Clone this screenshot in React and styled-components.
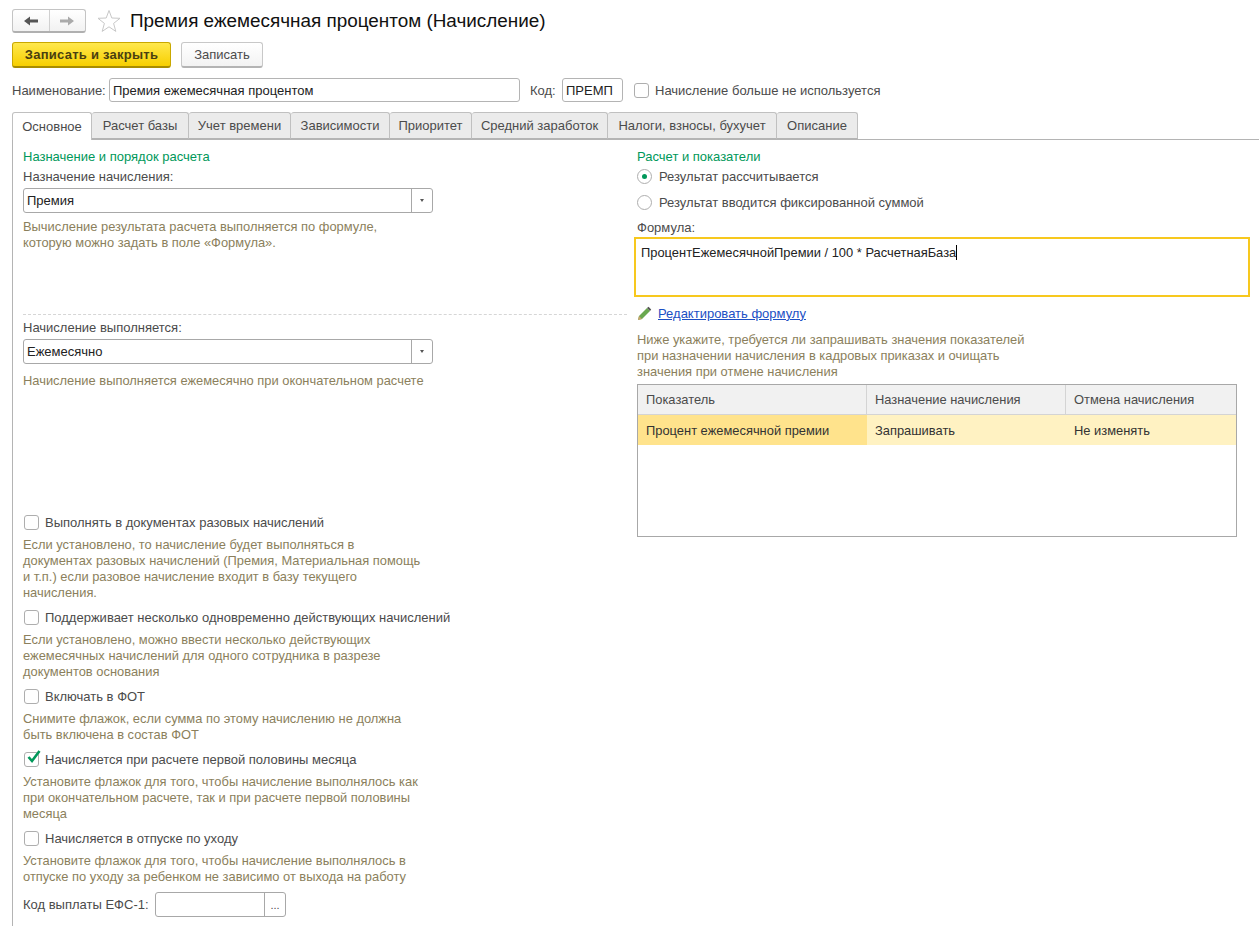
import styled, { createGlobalStyle } from 'styled-components'

const GlobalStyle = createGlobalStyle`
  html, body {
    margin: 0;
    padding: 0;
    background: #fff;
    font-family: "Liberation Sans", Arial, sans-serif;
    font-size: 13px;
    color: #4b4b4b;
  }
`
const Page = styled.div`
  width: 1259px;
  height: 926px;
  overflow: hidden;
  box-sizing: border-box;
  padding: 9px 0 0 12px;
`
const TitleRow = styled.div`
  display: flex;
  align-items: center;
  height: 24px;
`
const NavGroup = styled.div`
  display: flex;
  width: 74px;
  height: 24px;
  box-sizing: border-box;
  border: 1px solid #c4c4c4;
  border-bottom: 2px solid #b0b0b0;
  border-radius: 3px;
  background: linear-gradient(#fff, #f2f2f2);
`
const NavButton = styled.div`
  flex: 1;
  display: flex;
  align-items: center;
  justify-content: center;
  border-left: ${(p) => (p.$divided ? '1px solid #d0d0d0' : 'none')};
`
const StarIcon = styled.svg`
  margin: 0 9px 0 11px;
`
const Title = styled.h1`
  margin: 0;
  font-size: 18.9px;
  font-weight: 400;
  color: #111;
`
const ButtonRow = styled.div`
  display: flex;
  gap: 10px;
  margin-top: 9px;
`
const Button = styled.div`
  height: 26px;
  box-sizing: border-box;
  display: flex;
  align-items: center;
  justify-content: center;
  border-radius: 3px;
  width: ${(p) => (p.$primary ? '159px' : '82px')};
  font-weight: ${(p) => (p.$primary ? 700 : 400)};
  letter-spacing: ${(p) => (p.$primary ? '0.25px' : '0')};
  color: ${(p) => (p.$primary ? '#4a3f10' : '#4b4b4b')};
  background: ${(p) => (p.$primary ? 'linear-gradient(#ffe84d, #f7cf00)' : 'linear-gradient(#fff, #f3f3f3)')};
  border: 1px solid ${(p) => (p.$primary ? '#c9a800' : '#c8c8c8')};
  border-bottom: 2px solid ${(p) => (p.$primary ? '#a88c00' : '#b4b4b4')};
`
const NameRow = styled.div`
  display: flex;
  align-items: center;
  height: 24px;
  margin-top: 10px;
`
const Label = styled.span`
  flex: none;
  white-space: nowrap;
  color: #4b4b4b;
  width: ${(p) => (p.$width ? `${p.$width}px` : 'auto')};
  margin-left: ${(p) => p.$left || 0}px;
`
const Input = styled.div`
  box-sizing: border-box;
  display: flex;
  align-items: center;
  height: 24px;
  width: ${(p) => p.$width}px;
  padding-left: 3px;
  border: 1px solid #b4b4b4;
  border-radius: 3px;
  color: #222;
  white-space: nowrap;
  background: #fff;
`
const Box = styled.span`
  flex: none;
  width: 15px;
  height: 15px;
  box-sizing: border-box;
  border: 1px solid #aeaeae;
  border-radius: 3px;
  background: #fff;
  position: relative;
  margin-left: ${(p) => p.$left || 0}px;
  margin-right: 6px;
`
const CheckMark = styled.svg`
  position: absolute;
  left: 1px;
  top: -4px;
`
const TabBar = styled.div`
  display: flex;
  height: 28px;
  margin-top: 10px;
  box-sizing: border-box;
  border-bottom: 1px solid #b4b4b4;
`
const Tab = styled.div`
  box-sizing: border-box;
  width: ${(p) => p.$width}px;
  height: ${(p) => (p.$active ? 28 : 27)}px;
  display: flex;
  align-items: center;
  justify-content: center;
  border: 1px solid #c0c0c0;
  border-left: ${(p) => (p.$first ? '1px solid #c0c0c0' : 'none')};
  border-bottom: ${(p) => (p.$active ? 'none' : '1px solid #b4b4b4')};
  border-radius: 3px 3px 0 0;
  background: ${(p) => (p.$active ? '#fff' : '#ebebeb')};
  color: #4b4b4b;
`
const Panel = styled.div`
  display: grid;
  grid-template-columns: 604px 622px;
  column-gap: 10px;
  height: 800px;
  padding-left: 10px;
  border-left: 1px solid #b4b4b4;
`
const Column = styled.div`
  display: flex;
  flex-direction: column;
`
const GroupTitle = styled.div`
  color: #00985a;
  height: 16px;
  line-height: 16px;
  margin-top: 9px;
`
const FieldLabel = styled.div`
  height: 16px;
  line-height: 16px;
  margin-top: ${(p) => p.$top || 0}px;
`
const SelectBox = styled.div`
  box-sizing: border-box;
  width: 410px;
  height: 25px;
  display: flex;
  align-items: center;
  border: 1px solid #a8a8a8;
  border-radius: 3px;
  margin-top: ${(p) => p.$top || 0}px;
  color: #222;
`
const SelectValue = styled.div`
  flex: 1;
  padding-left: 3px;
`
const SelectArrow = styled.div`
  width: 20px;
  height: 100%;
  display: flex;
  align-items: center;
  justify-content: center;
  border-left: 1px solid #a8a8a8;
  &::after {
    content: '';
    border-left: 2.5px solid transparent;
    border-right: 2.5px solid transparent;
    border-top: 3px solid #555;
  }
`
const Hint = styled.div`
  color: #8b7f5c;
  font-size: 12.9px;
  line-height: 16px;
  white-space: pre-line;
  margin-top: ${(p) => p.$top || 0}px;
`
const Divider = styled.div`
  border-top: 1px dashed #d6d6d6;
  margin-top: ${(p) => p.$top || 0}px;
`
const CheckRow = styled.div`
  display: flex;
  align-items: center;
  height: 18px;
  padding-left: 1px;
  margin-top: ${(p) => p.$top || 0}px;
`
const BottomRow = styled.div`
  display: flex;
  align-items: center;
  height: 25px;
  margin-top: 7px;
`
const PickField = styled.div`
  display: flex;
  width: 131px;
  height: 25px;
  box-sizing: border-box;
  border: 1px solid #a8a8a8;
  border-radius: 3px;
`
const PickButton = styled.div`
  margin-left: auto;
  width: 20px;
  border-left: 1px solid #a8a8a8;
  text-align: center;
  font-size: 11px;
  line-height: 24px;
`
const RadioRow = styled.div`
  display: flex;
  align-items: center;
  height: 16px;
  margin-top: ${(p) => p.$top || 0}px;
`
const Radio = styled.span`
  width: 15px;
  height: 15px;
  box-sizing: border-box;
  border: 1px solid #aeaeae;
  border-radius: 50%;
  margin-right: 7px;
  display: flex;
  align-items: center;
  justify-content: center;
  &::after {
    content: '';
    display: ${(p) => (p.$on ? 'block' : 'none')};
    width: 5px;
    height: 5px;
    border-radius: 50%;
    background: #00985a;
  }
`
const FormulaBox = styled.div`
  box-sizing: border-box;
  width: 616px;
  height: 60px;
  margin: 1px 0 0 -3px;
  padding: 6px 5px;
  border: 2px solid #f7c81e;
  color: #222;
  font-size: 12.9px;
`
const Caret = styled.span`
  display: inline-block;
  width: 1px;
  height: 15px;
  background: #000;
  vertical-align: -3px;
`
const LinkRow = styled.div`
  display: flex;
  align-items: center;
  gap: 6px;
  height: 16px;
  margin-top: 8px;
`
const FormulaLink = styled.a`
  color: #1b4fc4;
  text-decoration: underline;
`
const Table = styled.div`
  box-sizing: border-box;
  width: 600px;
  height: 153px;
  margin-top: 4px;
  border: 1px solid #a8a8a8;
  font-size: 12.9px;
`
const TableRow = styled.div`
  display: grid;
  grid-template-columns: 229px 199px 1fr;
  height: 30px;
`
const HeadCell = styled.div`
  display: flex;
  align-items: center;
  padding-left: 8px;
  background: #f1f1f1;
  border-right: 1px solid #d4d4d4;
  border-bottom: 1px solid #d4d4d4;
  &:last-child {
    border-right: none;
  }
`
const BodyCell = styled.div`
  display: flex;
  align-items: center;
  padding-left: 8px;
  color: #333;
  background: ${(p) => (p.$current ? '#ffe38c' : '#fff2c2')};
`

const tabs = [
  ['Основное', 80],
  ['Расчет базы', 97],
  ['Учет времени', 102],
  ['Зависимости', 99],
  ['Приоритет', 82],
  ['Средний заработок', 136],
  ['Налоги, взносы, бухучет', 169],
  ['Описание', 81],
]

function Check({ checked, children, top }) {
  return (
    <CheckRow $top={top}>
      <Box>
        {checked && (
          <CheckMark width="16" height="16" viewBox="0 0 16 16">
            <path d="M2.5 8 L6 12 L13.5 2" fill="none" stroke="#00985a" strokeWidth="2.6" />
          </CheckMark>
        )}
      </Box>
      {children}
    </CheckRow>
  )
}

export default function App() {
  return (
    <Page>
      <GlobalStyle />
      <TitleRow>
        <NavGroup>
          <NavButton>
            <svg width="16" height="12" viewBox="0 0 16 12">
              <path d="M1 6 L7 1.5 V4.5 H15 V7.5 H7 V10.5 Z" fill="#555" />
            </svg>
          </NavButton>
          <NavButton $divided>
            <svg width="16" height="12" viewBox="0 0 16 12">
              <path d="M15 6 L9 1.5 V4.5 H1 V7.5 H9 V10.5 Z" fill="#aaa" />
            </svg>
          </NavButton>
        </NavGroup>
        <StarIcon width="24" height="24" viewBox="0 0 24 24">
          <path
            d="M12 1.5 L14.8 9 L23 9.3 L16.6 14.4 L18.8 22.4 L12 17.8 L5.2 22.4 L7.4 14.4 L1 9.3 L9.2 9 Z"
            fill="#fff"
            stroke="#c8c8c8"
          />
        </StarIcon>
        <Title>Премия ежемесячная процентом (Начисление)</Title>
      </TitleRow>
      <ButtonRow>
        <Button $primary>Записать и закрыть</Button>
        <Button>Записать</Button>
      </ButtonRow>
      <NameRow>
        <Label $width={97}>Наименование:</Label>
        <Input $width={411}>Премия ежемесячная процентом</Input>
        <Label $width={32} $left={10}>
          Код:
        </Label>
        <Input $width={61}>ПРЕМП</Input>
        <Box $left={11} />
        <Label>Начисление больше не используется</Label>
      </NameRow>
      <TabBar>
        {tabs.map(([name, width], i) => (
          <Tab key={name} $width={width} $active={i === 0} $first={i === 0}>
            {name}
          </Tab>
        ))}
      </TabBar>
      <Panel>
        <Column>
          <GroupTitle>Назначение и порядок расчета</GroupTitle>
          <FieldLabel $top={4}>Назначение начисления:</FieldLabel>
          <SelectBox $top={3}>
            <SelectValue>Премия</SelectValue>
            <SelectArrow />
          </SelectBox>
          <Hint $top={6}>
            {'Вычисление результата расчета выполняется по формуле,\nкоторую можно задать в поле «Формула».'}
          </Hint>
          <Divider $top={63} />
          <FieldLabel $top={5}>Начисление выполняется:</FieldLabel>
          <SelectBox $top={3}>
            <SelectValue>Ежемесячно</SelectValue>
            <SelectArrow />
          </SelectBox>
          <Hint $top={9}>Начисление выполняется ежемесячно при окончательном расчете</Hint>
          <Check top={124}>Выполнять в документах разовых начислений</Check>
          <Hint $top={6}>
            {'Если установлено, то начисление будет выполняться в\nдокументах разовых начислений (Премия, Материальная помощь\nи т.п.) если разовое начисление входит в базу текущего\nначисления.'}
          </Hint>
          <Check top={7}>Поддерживает несколько одновременно действующих начислений</Check>
          <Hint $top={6}>
            {'Если установлено, можно ввести несколько действующих\nежемесячных начислений для одного сотрудника в разрезе\nдокументов основания'}
          </Hint>
          <Check top={7}>Включать в ФОТ</Check>
          <Hint $top={6}>
            {'Снимите флажок, если сумма по этому начислению не должна\nбыть включена в состав ФОТ'}
          </Hint>
          <Check checked top={7}>
            Начисляется при расчете первой половины месяца
          </Check>
          <Hint $top={6}>
            {'Установите флажок для того, чтобы начисление выполнялось как\nпри окончательном расчете, так и при расчете первой половины\nмесяца'}
          </Hint>
          <Check top={7}>Начисляется в отпуске по уходу</Check>
          <Hint $top={6}>
            {'Установите флажок для того, чтобы начисление выполнялось в\nотпуске по уходу за ребенком не зависимо от выхода на работу'}
          </Hint>
          <BottomRow>
            <Label $width={132}>Код выплаты ЕФС-1:</Label>
            <PickField>
              <PickButton>...</PickButton>
            </PickField>
          </BottomRow>
        </Column>
        <Column>
          <GroupTitle>Расчет и показатели</GroupTitle>
          <RadioRow $top={3}>
            <Radio $on />
            Результат рассчитывается
          </RadioRow>
          <RadioRow $top={10}>
            <Radio />
            Результат вводится фиксированной суммой
          </RadioRow>
          <FieldLabel $top={10}>Формула:</FieldLabel>
          <FormulaBox>
            ПроцентЕжемесячнойПремии / 100 * РасчетнаяБаза
            <Caret />
          </FormulaBox>
          <LinkRow>
            <svg width="15" height="15" viewBox="0 0 15 15">
              <path d="M1 14 L2 10 L10 2 L13 5 L5 13 Z" fill="#6aa84f" />
              <path d="M10 2 L11.5 0.8 L14.2 3.5 L13 5 Z" fill="#555" />
              <path d="M1 14 L2 10 L5 13 Z" fill="#c9a26b" />
            </svg>
            <FormulaLink href="#">Редактировать формулу</FormulaLink>
          </LinkRow>
          <Hint $top={11}>
            {'Ниже укажите, требуется ли запрашивать значения показателей\nпри назначении начисления в кадровых приказах и очищать\nзначения при отмене начисления'}
          </Hint>
          <Table>
            <TableRow>
              <HeadCell>Показатель</HeadCell>
              <HeadCell>Назначение начисления</HeadCell>
              <HeadCell>Отмена начисления</HeadCell>
            </TableRow>
            <TableRow>
              <BodyCell $current>Процент ежемесячной премии</BodyCell>
              <BodyCell>Запрашивать</BodyCell>
              <BodyCell>Не изменять</BodyCell>
            </TableRow>
          </Table>
        </Column>
      </Panel>
    </Page>
  )
}
